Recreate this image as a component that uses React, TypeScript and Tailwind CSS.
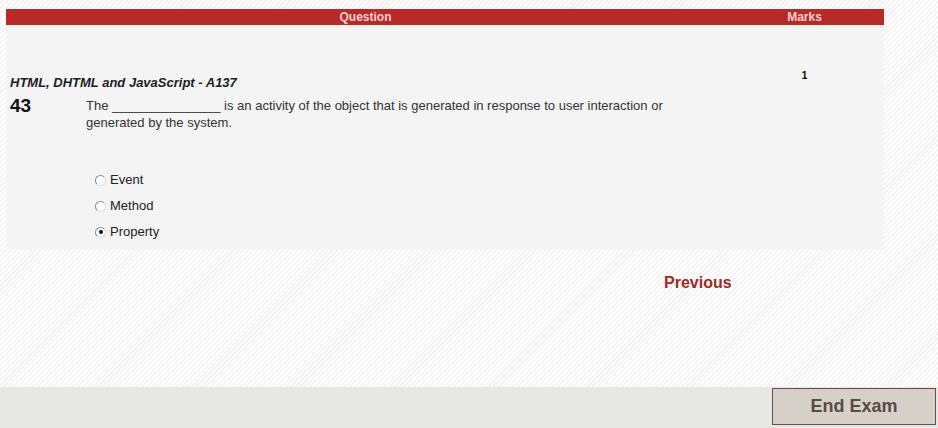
import React from 'react';

const options = [
  { label: 'Event', checked: false },
  { label: 'Method', checked: false },
  { label: 'Property', checked: true },
];

const Radio: React.FC<{ checked: boolean }> = ({ checked }) => (
  <span className="w-[11px] h-[11px] rounded-full border border-[#8a8a8a] border-b-[#dcdcdc] border-r-[#dcdcdc] bg-white flex items-center justify-center shrink-0">
    {checked && <span className="w-[4px] h-[4px] rounded-full bg-black"></span>}
  </span>
);

export default function App() {
  return (
    <div className="w-[938px] h-[428px] flex flex-col overflow-hidden font-['Liberation_Sans',Arial,sans-serif] bg-[repeating-linear-gradient(135deg,#ffffff_0px,#ffffff_2px,#f1f1f1_2px,#f1f1f1_3.5px)]">
      <div className="flex-1 pt-[9px] pl-[6px]">
        <div className="w-[878px]">
          <div className="flex h-[16px] items-center bg-[#b92a26] text-[#f2d2ce] text-[12px] font-bold leading-[16px]">
            <div className="w-[719px] text-center">Question</div>
            <div className="flex-1 text-center">Marks</div>
          </div>
          <div className="flex h-[225px] bg-[#f4f4f4]">
            <div className="w-[719px] pl-[4px] pt-[51px]">
              <div className="text-[13px] leading-[14px] italic font-bold text-[#1e1e1e]">HTML, DHTML and JavaScript - A137</div>
              <div className="flex mt-[7px]">
                <div className="w-[76px] shrink-0 text-[19px] leading-[17px] font-bold text-[#111]">43</div>
                <div className="w-[600px] text-[13px] leading-[17px] text-[#333]">
                  The _______________ is an activity of the object that is generated in response to user interaction or generated by the system.
                </div>
              </div>
              <div className="mt-[36px] pl-[85px] flex flex-col">
                {options.map((o) => (
                  <div key={o.label} className="h-[26px] flex items-center gap-[4px] text-[13px] text-[#222]">
                    <Radio checked={o.checked} />
                    <span>{o.label}</span>
                  </div>
                ))}
              </div>
            </div>
            <div className="flex-1 text-center pt-[45px] text-[10px] leading-[12px] font-bold text-black">1</div>
          </div>
          <div className="mt-[23px] ml-[658px] text-[16px] leading-[20px] font-bold text-[#9e2a27]">Previous</div>
        </div>
      </div>
      <div className="h-[41px] bg-[#e7e7e5] flex justify-end pr-[2px] pt-[1px]">
        <button className="w-[164px] h-[37px] border border-[#6b4d47] bg-[#d6d0c8] text-[#5b4944] text-[18px] font-bold">End Exam</button>
      </div>
    </div>
  );
}
